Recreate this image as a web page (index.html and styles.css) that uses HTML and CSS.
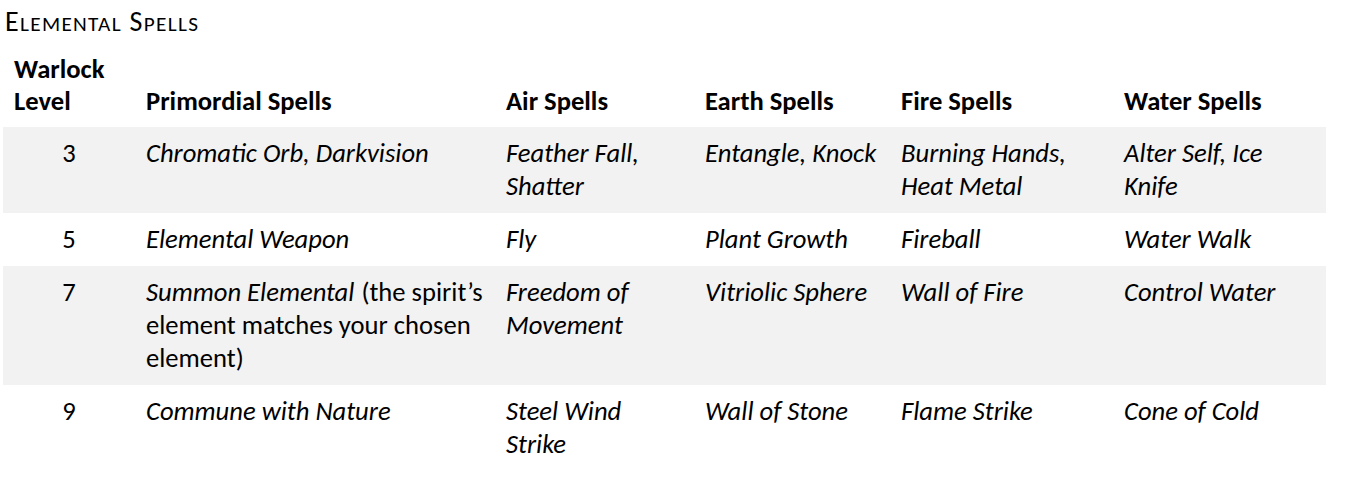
FILE: index.html
```html
<!DOCTYPE html>
<html>
<head>
<meta charset="utf-8">
<link rel="stylesheet" href="styles.css">
</head>
<body>
<div class="page">
  <h2 class="title">E<span class="sc">lemental</span> S<span class="sc">pells</span></h2>
  <table class="spells">
    <colgroup>
      <col class="c-level"><col class="c-prim"><col class="c-air"><col class="c-earth"><col class="c-fire"><col class="c-water">
    </colgroup>
    <thead>
      <tr>
        <th>Warlock<br>Level</th>
        <th>Primordial Spells</th>
        <th>Air Spells</th>
        <th>Earth Spells</th>
        <th>Fire Spells</th>
        <th>Water Spells</th>
      </tr>
    </thead>
    <tbody>
      <tr class="shade">
        <td class="lvl">3</td>
        <td><i>Chromatic Orb, Darkvision</i></td>
        <td><i>Feather Fall, Shatter</i></td>
        <td><i>Entangle, Knock</i></td>
        <td><i>Burning Hands, Heat Metal</i></td>
        <td><i>Alter Self, Ice Knife</i></td>
      </tr>
      <tr>
        <td class="lvl">5</td>
        <td><i>Elemental Weapon</i></td>
        <td><i>Fly</i></td>
        <td><i>Plant Growth</i></td>
        <td><i>Fireball</i></td>
        <td><i>Water Walk</i></td>
      </tr>
      <tr class="shade">
        <td class="lvl">7</td>
        <td><i class="lead">Summon Elemental</i> (the spirit’s element matches your chosen element)</td>
        <td><i>Freedom of Movement</i></td>
        <td><i>Vitriolic Sphere</i></td>
        <td><i>Wall of Fire</i></td>
        <td><i>Control Water</i></td>
      </tr>
      <tr>
        <td class="lvl">9</td>
        <td><i>Commune with Nature</i></td>
        <td><i>Steel Wind Strike</i></td>
        <td><i>Wall of Stone</i></td>
        <td><i>Flame Strike</i></td>
        <td><i>Cone of Cold</i></td>
      </tr>
    </tbody>
  </table>
</div>
</body>
</html>
```

FILE: styles.css
```css
html, body {
  margin: 0;
  padding: 0;
  background: #ffffff;
}
body {
  font-family: Carlito, Calibri, Lato, "Open Sans", sans-serif;
  color: #000000;
}
.page {
  padding: 7px 0 0 3px;
}
.title {
  margin: 0 0 0 2px;
  font-size: 28px;
  font-weight: normal;
  line-height: 30px;
  letter-spacing: 1.3px;
}
.title .sc {
  text-transform: uppercase;
  font-size: 0.76em;
}
.spells {
  margin-top: 14px;
  border-collapse: collapse;
  table-layout: fixed;
  width: 1323px;
  font-size: 26.6px;
  line-height: 33px;
}
.c-level { width: 132px; }
.c-prim { width: 360px; }
.c-air { width: 199px; }
.c-earth { width: 196px; }
.c-fire { width: 223px; }
.c-water { width: 213px; }
.spells th {
  text-align: left;
  vertical-align: bottom;
  font-weight: bold;
  line-height: 32px;
  padding: 0 11px 10px 11px;
}
.spells td {
  vertical-align: top;
  padding: 10px 11px 10px 11px;
}
.spells td.lvl {
  text-align: center;
}
.lead {
  margin-right: 1px;
}
.shade td {
  background: #f2f2f2;
}
```
